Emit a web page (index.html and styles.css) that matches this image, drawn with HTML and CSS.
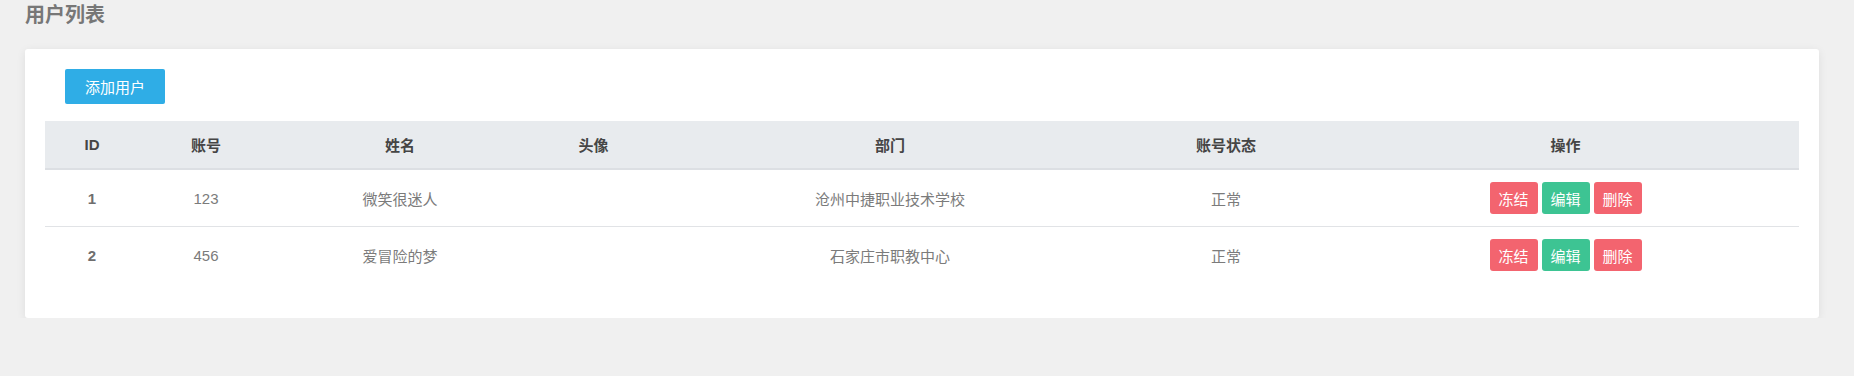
FILE: index.html
```html
<!DOCTYPE html>
<html lang="zh-CN">
<head>
    <meta charset="UTF-8">
    <meta name="viewport" content="width=device-width, initial-scale=1.0">
    <title>用户列表</title>
    <link rel="stylesheet" href="styles.css">
</head>
<body>
    <h2 class="page-title">用户列表</h2>

    <!-- User list card -->
    <div class="card">
        <button class="btn-add">添加用户</button>

        <table class="user-table">
            <colgroup>
                <col class="col-id">
                <col class="col-account">
                <col class="col-name">
                <col class="col-avatar">
                <col class="col-dept">
                <col class="col-status">
                <col class="col-ops">
            </colgroup>
            <thead>
                <tr>
                    <th>ID</th>
                    <th>账号</th>
                    <th>姓名</th>
                    <th>头像</th>
                    <th>部门</th>
                    <th>账号状态</th>
                    <th>操作</th>
                </tr>
            </thead>
            <tbody>
                <tr>
                    <td class="cell-id">1</td>
                    <td>123</td>
                    <td>微笑很迷人</td>
                    <td></td>
                    <td>沧州中捷职业技术学校</td>
                    <td>正常</td>
                    <td>
                        <div class="ops">
                            <button class="btn btn-red">冻结</button>
                            <button class="btn btn-green">编辑</button>
                            <button class="btn btn-red">删除</button>
                        </div>
                    </td>
                </tr>
                <tr>
                    <td class="cell-id">2</td>
                    <td>456</td>
                    <td>爱冒险的梦</td>
                    <td></td>
                    <td>石家庄市职教中心</td>
                    <td>正常</td>
                    <td>
                        <div class="ops">
                            <button class="btn btn-red">冻结</button>
                            <button class="btn btn-green">编辑</button>
                            <button class="btn btn-red">删除</button>
                        </div>
                    </td>
                </tr>
            </tbody>
        </table>
    </div>
</body>
</html>
```

FILE: styles.css
```css
body {
    font-family: "Liberation Sans Narrow", "Liberation Sans", "Noto Sans CJK SC", sans-serif;
    margin: 0;
    padding: 0 35px 0 25px;
    background-color: #f0f0f0;
    color: #7b7b7b;
}

.page-title {
    margin: 0 0 19px 0;
    font-size: 20px;
    line-height: 30px;
    font-weight: bold;
    color: #777;
}

.card {
    background-color: #fff;
    border-radius: 3px;
    padding: 20px 20px 35px 20px;
    box-shadow: 0 2px 10px rgba(0, 0, 0, 0.08);
}

.btn-add {
    display: block;
    width: 100px;
    height: 35px;
    margin: 0 0 17px 20px;
    padding: 0;
    border: none;
    border-radius: 2px;
    background-color: #2fade6;
    color: #fff;
    font-family: inherit;
    font-size: 15px;
    cursor: pointer;
}

.user-table {
    width: 100%;
    border-collapse: collapse;
    table-layout: fixed;
    font-size: 15px;
}

.col-id { width: 94px; }
.col-account { width: 134px; }
.col-name { width: 254px; }
.col-avatar { width: 133px; }
.col-dept { width: 460px; }
.col-status { width: 212px; }

.user-table th {
    height: 47px;
    padding: 0;
    background-color: #e8ebee;
    border-bottom: 2px solid #dcdfe3;
    color: #454545;
    font-weight: bold;
    text-align: center;
}

.user-table td {
    height: 56px;
    padding: 0;
    text-align: center;
    vertical-align: middle;
}

.user-table tbody tr + tr td {
    border-top: 1px solid #e1e3e6;
}

.cell-id {
    font-weight: bold;
    color: #6e6e6e;
}

.ops {
    display: flex;
    justify-content: center;
    gap: 4px;
}

.btn {
    width: 48px;
    height: 32px;
    padding: 0;
    border: none;
    border-radius: 3px;
    color: #fff;
    font-family: inherit;
    font-size: 15px;
    cursor: pointer;
}

.btn-red {
    background-color: #f3646f;
}

.btn-green {
    background-color: #3dc493;
}
```
